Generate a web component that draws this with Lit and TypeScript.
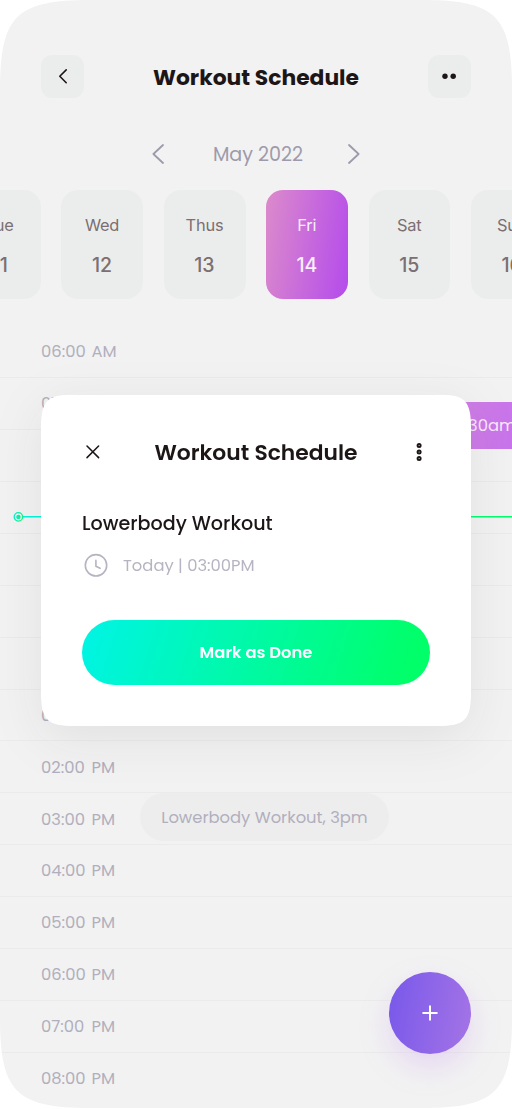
import { LitElement, html, css, svg } from "lit";
import { customElement } from "lit/decorators.js";
import { classMap } from "lit/directives/class-map.js";

const DAYS: [string, string][] = [
  ["Tue", "11"],
  ["Wed", "12"],
  ["Thus", "13"],
  ["Fri", "14"],
  ["Sat", "15"],
  ["Sun", "16"],
];

const HOURS: [string, string][] = [
  ["06:00", "AM"],
  ["07:00", "AM"],
  ["08:00", "AM"],
  ["09:00", "AM"],
  ["10:00", "AM"],
  ["11:00", "AM"],
  ["12:00", "AM"],
  ["01:00", "PM"],
  ["02:00", "PM"],
  ["03:00", "PM"],
  ["04:00", "PM"],
  ["05:00", "PM"],
  ["06:00", "PM"],
  ["07:00", "PM"],
  ["08:00", "PM"],
];

@customElement("app-root")
export class AppRoot extends LitElement {
  static styles = css`
    :host {
      display: block;
      width: 512px;
      height: 1109px;
      overflow: hidden;
      background: #fff;
      font-family: Poppins, Inter, sans-serif;
      color: #1d1617;
      white-space: nowrap;
    }
    * {
      box-sizing: border-box;
    }
    svg {
      display: block;
      flex: none;
    }
    .screen {
      position: relative;
      height: 1108px;
      overflow: hidden;
      background: #f2f2f2;
      clip-path: path(
        "M0 90C0 16 16 0 90 0H422C496 0 512 16 512 90V1018C512 1092 496 1108 422 1108H90C16 1108 0 1092 0 1018Z"
      );
    }
    .header {
      display: flex;
      justify-content: space-between;
      align-items: center;
      padding: 54.6px 41px 0;
    }
    .square {
      display: grid;
      place-items: center;
      width: 43px;
      height: 43.5px;
      border-radius: 11px;
      background: #ebedec;
    }
    .title {
      padding-top: 3px;
      font-size: 21.84px;
      line-height: 30px;
      font-weight: 700;
    }
    .month {
      display: flex;
      justify-content: center;
      align-items: center;
      gap: 48.4px;
      height: 30px;
      margin-top: 41.3px;
      color: #9d9bab;
      font-size: 19.11px;
      font-weight: 400;
    }
    .month span {
      padding: 1px 0 0 1px;
      margin-right: -3px;
    }
    .days {
      display: flex;
      gap: 20.5px;
      margin: 20.6px 0 0 -41px;
      height: 108.7px;
    }
    .day {
      flex: none;
      width: 81.9px;
      border-radius: 17px;
      background: #ebedec;
      color: #7b6f72;
      text-align: center;
      font-family: Inter, sans-serif;
      padding: 24px 0.6px 0 0;
    }
    .name {
      font-size: 16.4px;
      line-height: 22px;
      letter-spacing: -0.2px;
    }
    .num {
      margin-top: 16px;
      font-size: 19.5px;
      line-height: 26px;
      font-weight: 500;
    }
    .active {
      color: #f6eefa;
      background: linear-gradient(99deg, #dc8bcb 0%, #b44bec 100%);
    }
    .hours {
      margin-top: 27.5px;
    }
    .hour {
      display: flex;
      align-items: center;
      gap: 6px;
      height: 51.92px;
      padding: 0.6px 0 0 41px;
      border-bottom: 1px solid #ebebeb;
      color: #b1afbd;
      font-size: 16.38px;
      font-weight: 400;
    }
    .hour:last-child {
      border-bottom-color: transparent;
    }
    .digits {
      width: 44.5px;
    }
    .event {
      position: absolute;
      height: 47.5px;
      line-height: 49px;
      font-size: 16.38px;
      font-weight: 400;
      color: #b1afbd;
    }
    .morning {
      top: 401.5px;
      left: 320px;
      width: 250px;
      padding-left: 33.7px;
      border-radius: 24px;
      background: linear-gradient(100deg, #dc93d6 10%, #c873ec 78%);
      color: #f7e8fa;
      line-height: 47.5px;
    }
    .afternoon {
      top: 793px;
      left: 140px;
      width: 249px;
      text-align: center;
      border-radius: 24px;
      background: #ededed;
    }
    .now {
      position: absolute;
      top: 512px;
      left: 13px;
    }
    .fab {
      position: absolute;
      top: 972px;
      left: 389px;
      width: 82px;
      height: 82px;
      display: grid;
      place-items: center;
      border-radius: 50%;
      background: linear-gradient(99deg, #7858ea, #a574e6);
      box-shadow: 0 13px 30px rgba(197, 139, 242, 0.27);
    }
    .dialog {
      position: absolute;
      top: 394.5px;
      left: 41px;
      width: 430px;
      height: 331.5px;
      padding: 42px 41px 0;
      filter: drop-shadow(0 12px 25px rgba(29, 22, 23, 0.08));
    }
    .dialog::before {
      content: "";
      position: absolute;
      inset: 0;
      z-index: -1;
      background: #fff;
      clip-path: path(
        "M0 34C0 6 6 0 34 0H396C424 0 430 6 430 34V297.5C430 325.5 424 331.5 396 331.5H34C6 331.5 0 325.5 0 297.5Z"
      );
    }
    .bar {
      display: flex;
      justify-content: space-between;
      align-items: center;
      height: 31px;
    }
    .bar .title {
      padding-top: 1px;
      font-weight: 600;
    }
    .workout {
      margin-top: 42px;
      font-size: 19.11px;
      line-height: 28px;
      font-weight: 500;
    }
    .when {
      display: flex;
      align-items: center;
      gap: 14.5px;
      height: 28px;
      margin-top: 13.5px;
      padding-left: 1.5px;
      color: #b6b4c2;
      font-size: 16.38px;
      font-weight: 400;
    }
    .done {
      display: grid;
      place-items: center;
      margin-top: 40.5px;
      height: 65.5px;
      border-radius: 33px;
      background: linear-gradient(108deg, #00f4e2 3%, #00ff68 94%);
      color: #fff;
      font-size: 16.38px;
      font-weight: 600;
    }
  `;

  render() {
    return html`
      <div class="screen">
        <div class="header">
          <div class="square">
            <svg width="16" height="18" viewBox="0 0 16 18" fill="none" stroke="#1d1617" stroke-width="1.6" stroke-linecap="round" stroke-linejoin="round">
              <path d="M11.2 2.9 4.8 9.3l6.4 6.4" />
            </svg>
          </div>
          <span class="title">Workout Schedule</span>
          <div class="square">
            <svg width="16" height="8" viewBox="0 0 16 8" fill="#1d1617">
              <circle cx="4" cy="4.3" r="2.7" />
              <circle cx="12.2" cy="4.3" r="2.7" />
            </svg>
          </div>
        </div>
        <div class="month">
          ${this.chevron("M11 1 1.4 10l9.6 9")}
          <span>May 2022</span>
          ${this.chevron("M1 1 10.6 10 1 19")}
        </div>
        <div class="days">
          ${DAYS.map(
            ([name, num]) => html`<div class=${classMap({ day: true, active: name === "Fri" })}>
              <div class="name">${name}</div>
              <div class="num">${num}</div>
            </div>`
          )}
        </div>
        <div class="hours">
          ${HOURS.map(
            ([digits, half]) => html`<div class="hour"><span class="digits">${digits}</span><span>${half}</span></div>`
          )}
        </div>
        <div class="event morning">Ab Workout, 7:30am</div>
        <div class="event afternoon">Lowerbody Workout, 3pm</div>
        <svg class="now" width="499" height="10" viewBox="0 0 499 10">
          <defs>
            <linearGradient id="line" gradientUnits="userSpaceOnUse" x1="0" y1="0" x2="499" y2="0">
              <stop offset="0" stop-color="#00f4e2" />
              <stop offset="1" stop-color="#00ff68" />
            </linearGradient>
            <linearGradient id="dot" x1="0" y1="0" x2="1" y2="0.3">
              <stop offset="0" stop-color="#06efcf" />
              <stop offset="1" stop-color="#0cf586" />
            </linearGradient>
          </defs>
          <path d="M10 4.1H499V5.5H10Z" fill="url(#line)" />
          <circle cx="5.4" cy="4.9" r="4.2" fill="none" stroke="url(#dot)" stroke-width="1.3" />
          <circle cx="5.4" cy="4.9" r="2.2" fill="url(#dot)" />
        </svg>
        <div class="fab">
          <svg width="16" height="16" viewBox="0 0 16 16" fill="none" stroke="#fff" stroke-width="2" stroke-linecap="round">
            <path d="M8 1.2v13.6M1.2 8h13.6" />
          </svg>
        </div>
        <div class="dialog">
          <div class="bar">
            <svg width="22" height="22" viewBox="0 0 22 22" fill="none" stroke="#1d1617" stroke-width="1.5" stroke-linecap="round">
              <path d="M5 5 16.6 16.6M16.6 5 5 16.6" />
            </svg>
            <span class="title">Workout Schedule</span>
            <svg width="22" height="22" viewBox="0 0 22 22" fill="none" stroke="#1d1617" stroke-width="2">
              <circle cx="11.1" cy="4.6" r="1.5" />
              <circle cx="11.1" cy="11" r="1.5" />
              <circle cx="11.1" cy="17.4" r="1.5" />
            </svg>
          </div>
          <div class="workout">Lowerbody Workout</div>
          <div class="when">
            <svg width="25" height="25" viewBox="0 0 25 25" fill="none" stroke="#b6b4c2" stroke-width="1.6" stroke-linecap="round" stroke-linejoin="round">
              <circle cx="12" cy="12.3" r="10.7" />
              <path d="M11.9 7.4v5.8l4.2 2.1" />
            </svg>
            <span>Today | 03:00PM</span>
          </div>
          <div class="done">Mark as Done</div>
        </div>
      </div>
    `;
  }

  private chevron(d: string) {
    return html`<svg width="12" height="20" viewBox="0 0 12 20" fill="none" stroke="#9d9bab" stroke-width="1.8" stroke-linecap="round" stroke-linejoin="round">
      ${svg`<path d=${d} />`}
    </svg>`;
  }
}
